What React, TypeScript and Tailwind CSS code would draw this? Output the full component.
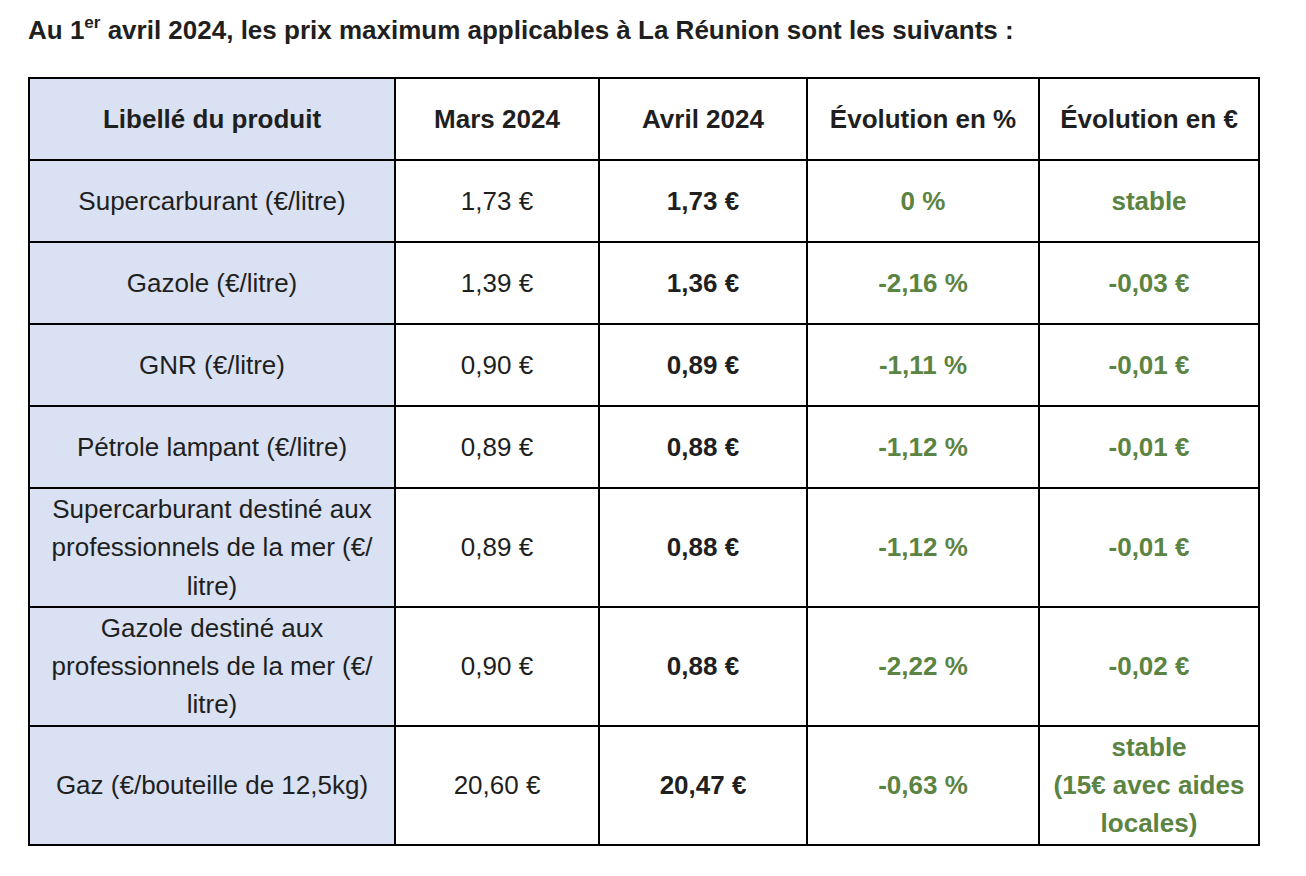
import React from "react";

type Row = {
  label: string[];
  mars: string;
  avril: string;
  pct: string;
  eur: string[];
};

const rows: Row[] = [
  { label: ["Supercarburant (€/litre)"], mars: "1,73 €", avril: "1,73 €", pct: "0 %", eur: ["stable"] },
  { label: ["Gazole (€/litre)"], mars: "1,39 €", avril: "1,36 €", pct: "-2,16 %", eur: ["-0,03 €"] },
  { label: ["GNR (€/litre)"], mars: "0,90 €", avril: "0,89 €", pct: "-1,11 %", eur: ["-0,01 €"] },
  { label: ["Pétrole lampant (€/litre)"], mars: "0,89 €", avril: "0,88 €", pct: "-1,12 %", eur: ["-0,01 €"] },
  {
    label: ["Supercarburant destiné aux", "professionnels de la mer (€/", "litre)"],
    mars: "0,89 €",
    avril: "0,88 €",
    pct: "-1,12 %",
    eur: ["-0,01 €"],
  },
  {
    label: ["Gazole destiné aux", "professionnels de la mer (€/", "litre)"],
    mars: "0,90 €",
    avril: "0,88 €",
    pct: "-2,22 %",
    eur: ["-0,02 €"],
  },
  {
    label: ["Gaz (€/bouteille de 12,5kg)"],
    mars: "20,60 €",
    avril: "20,47 €",
    pct: "-0,63 %",
    eur: ["stable", "(15€ avec aides", "locales)"],
  },
];

const cell = "border-2 border-black text-center align-middle px-0 py-px leading-[38.3px] whitespace-nowrap";

export default function App() {
  return (
    <div
      className="bg-white w-[1306px] h-[876px] text-[#1f1f1f]"
      style={{ fontFamily: '"Liberation Sans", Arial, sans-serif' }}
    >
      <div className="pl-[28px] pt-[14px]">
        <p className="text-[26px] font-bold leading-[32px] whitespace-nowrap">
          Au 1<sup className="text-[17px] align-baseline relative top-[-11px] leading-none">er</sup> avril 2024, les prix maximum applicables à La Réunion sont les suivants :
        </p>
        <table className="mt-[31px] border-collapse table-fixed w-[1230px] text-[26px]">
          <colgroup>
            <col className="w-[366px]" />
            <col className="w-[204px]" />
            <col className="w-[208px]" />
            <col className="w-[232px]" />
            <col className="w-[220px]" />
          </colgroup>
          <thead>
            <tr className="h-[82px]">
              <th className={`${cell} bg-[#d9e1f2] font-bold`}>Libellé du produit</th>
              <th className={`${cell} font-bold`}>Mars 2024</th>
              <th className={`${cell} font-bold`}>Avril 2024</th>
              <th className={`${cell} font-bold`}>Évolution en %</th>
              <th className={`${cell} font-bold`}>Évolution en €</th>
            </tr>
          </thead>
          <tbody>
            {rows.map((r, i) => (
              <tr key={i} className="h-[82px]">
                <td className={`${cell} bg-[#d9e1f2]`}>
                  {r.label.map((l, j) => (
                    <div key={j}>{l}</div>
                  ))}
                </td>
                <td className={cell}>{r.mars}</td>
                <td className={`${cell} font-bold`}>{r.avril}</td>
                <td className={`${cell} font-bold text-[#5b8341]`}>{r.pct}</td>
                <td className={`${cell} font-bold text-[#5b8341]`}>
                  {r.eur.map((l, j) => (
                    <div key={j}>{l}</div>
                  ))}
                </td>
              </tr>
            ))}
          </tbody>
        </table>
      </div>
    </div>
  );
}
